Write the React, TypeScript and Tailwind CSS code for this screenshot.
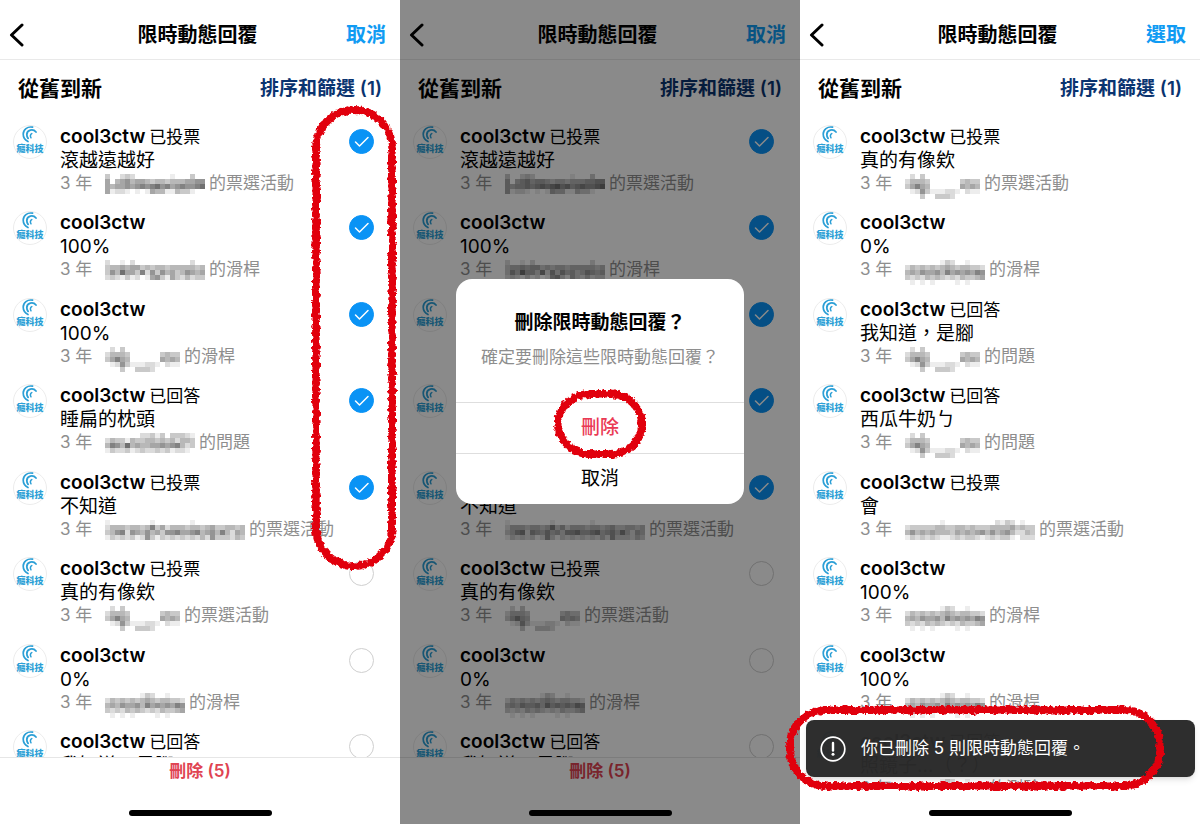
import React from 'react';

type MosaicKey = 'joking' | 'jokingAlt' | 'eg' | 'sunil' | 'sorry' | 'cool' | 'wen';

interface Reply {
  action?: string;
  body: string;
  mosaic: MosaicKey;
  target: string;
  checked?: boolean;
}

// Each string is one row of 5px cells, the digit is how dark the cell is
const MOSAICS: Record<MosaicKey, string[]> = {
  joking: [
    '30023200000001000300',
    '50456455434434445566',
    '54556567678675676678',
    '51221010154411433100',
  ],
  jokingAlt: [
    '20010200000000000200',
    '34454553434434444434',
    '36485537263645346545',
    '23213120156315324233',
  ],
  eg: [
    '020300000000000',
    '244430000003433',
    '357540000005454',
    '012631112210211',
    '000300333200000',
  ],
  sunil: [
    '000000022313033321',
    '243314334434342443',
    '476484544556567423',
    '132231232232312210',
  ],
  sorry: [
    '1000000001000000010000000000',
    '2444344347352444344345334434',
    '3467265464536675567456474254',
    '1323231263132323232426333243',
  ],
  cool: [
    '0000000132001000',
    '2434343454344332',
    '4546556475656576',
    '3232434323243345',
    '0101010000101000',
  ],
  wen: [
    '00000001000000000021320100',
    '23333344334434333444453433',
    '46454544435454564645642243',
    '13232321123233212323310222',
  ],
};

const SELECT_REPLIES: Reply[] = [
  { action: '已投票', body: '滾越遠越好', mosaic: 'joking', target: '的票選活動', checked: true },
  { body: '100%', mosaic: 'jokingAlt', target: '的滑桿', checked: true },
  { body: '100%', mosaic: 'eg', target: '的滑桿', checked: true },
  { action: '已回答', body: '睡扁的枕頭', mosaic: 'sunil', target: '的問題', checked: true },
  { action: '已投票', body: '不知道', mosaic: 'sorry', target: '的票選活動', checked: true },
  { action: '已投票', body: '真的有像欸', mosaic: 'eg', target: '的票選活動' },
  { body: '0%', mosaic: 'cool', target: '的滑桿' },
  { action: '已回答', body: '我知道，是腳', mosaic: 'eg', target: '的問題' },
];

const REMAINING_REPLIES: Reply[] = [
  { action: '已投票', body: '真的有像欸', mosaic: 'eg', target: '的票選活動' },
  { body: '0%', mosaic: 'cool', target: '的滑桿' },
  { action: '已回答', body: '我知道，是腳', mosaic: 'eg', target: '的問題' },
  { action: '已回答', body: '西瓜牛奶ㄅ', mosaic: 'eg', target: '的問題' },
  { action: '已投票', body: '會', mosaic: 'wen', target: '的票選活動' },
  { body: '100%', mosaic: 'cool', target: '的滑桿' },
  { body: '100%', mosaic: 'cool', target: '的滑桿' },
  { action: '已回答', body: '照鏡子…（？）', mosaic: 'cool', target: '的測驗' },
];

const Mosaic: React.FC<{ name: MosaicKey }> = ({ name }) => {
  const rows = MOSAICS[name];
  const width = rows[0].length * 5;

  return (
    <svg width={width} height="24" viewBox={`0 0 ${width} 24`} className="shrink-0 overflow-visible" shapeRendering="crispEdges" aria-hidden="true">
      {rows.map((row, y) =>
        row.split('').map((level, x) => (
          <rect key={`${x}-${y}`} x={x * 5} y={y * 5 + 2} width="5" height="5" fillOpacity={Number(level) * 0.07} />
        ))
      )}
    </svg>
  );
};

const Avatar: React.FC = () => (
  <svg width="34" height="34" viewBox="0 0 34 34" className="shrink-0" role="img" aria-label="癮科技">
    <circle cx="17" cy="17" r="16.5" fill="#fff" stroke="#ececec" />
    <g fill="none" stroke="#2b9fd6" strokeLinecap="round">
      <path d="M19.6 2.2C14.4 1.2 10.2 4.6 10.2 9c0 3.4 1.8 6 4.8 7.6" strokeWidth="1.7" />
      <path d="M23 7C20 3.4 14 4.8 13.8 9.6c0 1.6 0.5 2.8 1.3 3.8" strokeWidth="1.8" />
      <path d="M18.8 8.6c-1.4 0.6-1.9 2.4-0.8 4.2" strokeWidth="1.5" />
    </g>
    <text x="17" y="27" textAnchor="middle" fontSize="9" fontWeight="900" fill="#2b9fd6">
      癮科技
    </text>
  </svg>
);

const SelectBox: React.FC<{ label: string; checked: boolean }> = ({ label, checked }) => (
  <span className="relative mt-1 mr-[26px] size-[25px] shrink-0">
    <input
      type="checkbox"
      aria-label={label}
      defaultChecked={checked}
      className="peer block size-full appearance-none rounded-full border border-[#cfcfcf] checked:border-[#0a93f5] checked:bg-[#0a93f5]"
    />
    <svg
      viewBox="0 0 25 25"
      className="pointer-events-none absolute inset-0 hidden peer-checked:block"
      fill="none"
      stroke="#fff"
      strokeWidth="1.5"
      strokeLinecap="round"
      strokeLinejoin="round"
    >
      <path d="M6.5 13l4 4 8.5-8.5" />
    </svg>
  </span>
);

const ReplyRow: React.FC<{ reply: Reply; selectable: boolean }> = ({ reply, selectable }) => (
  <li className="flex h-[86px] shrink-0 items-start pt-[9px] pl-[13px] even:h-[87px]">
    <Avatar />
    <div className="ml-[13px] min-w-0 flex-1 pt-px whitespace-nowrap">
      <p className="flex h-[23px] items-center text-[17px]">
        <strong className="mr-1 text-[19px] font-semibold">cool3ctw</strong>
        {reply.action}
      </p>
      <p className="h-[23px] text-[19px] leading-[23px]">{reply.body}</p>
      <p className="flex h-6 items-center text-[17px] text-[#8e8e8e]">
        <span className="w-[45px] shrink-0">3 年</span>
        <Mosaic name={reply.mosaic} />
        <span className="ml-1">{reply.target}</span>
      </p>
    </div>
    {selectable && <SelectBox label={reply.body} checked={Boolean(reply.checked)} />}
  </li>
);

interface ScribbleProps {
  width: number;
  height: number;
  radius: number;
  className: string;
}

// Crayon outline: a thick rounded rect roughened with noise
const Scribble: React.FC<ScribbleProps> = ({ width, height, radius, className }) => (
  <svg width={width} height={height} className={`pointer-events-none absolute max-w-none overflow-visible ${className}`} aria-hidden="true">
    <g filter="url(#crayon)" fill="none" stroke="#e1000f">
      <rect x="5" y="5" width={width - 10} height={height - 10} rx={radius} strokeWidth="7" />
      <rect x="5" y="5" width={width - 10} height={height - 10} rx={radius} strokeWidth="8" strokeDasharray="4 2" />
    </g>
  </svg>
);

const HomeIndicator: React.FC = () => <div className="mx-auto mb-2 h-[6px] w-[143px] rounded-full bg-black" />;

interface PhoneScreenProps {
  actionLabel: string;
  replies: Reply[];
  selectable?: boolean;
  children?: React.ReactNode;
}

const PhoneScreen: React.FC<PhoneScreenProps> = ({ actionLabel, replies, selectable = false, children }) => (
  <section className="relative flex h-screen min-w-0 flex-col bg-white">
    <header className="grid h-[60px] shrink-0 grid-cols-[1fr_auto_1fr] items-center border-b border-[#e9e9e9] pt-[11px] pr-[14px] pl-[9px]">
      <button type="button" aria-label="返回" className="justify-self-start">
        <svg width="16" height="24" viewBox="0 0 16 24" fill="none" stroke="#000" strokeWidth="3" strokeLinecap="round" strokeLinejoin="round">
          <path d="M13 2L2.5 12 13 22" />
        </svg>
      </button>
      <h1 className="text-[20px] font-semibold">限時動態回覆</h1>
      <button type="button" className="justify-self-end text-[20px] font-semibold text-[#109bf3]">
        {actionLabel}
      </button>
    </header>

    <div className="flex h-14 shrink-0 items-center justify-between px-[18px] pt-[2px]">
      <h2 className="text-[21px] font-semibold">從舊到新</h2>
      <button type="button" className="text-[19px] font-semibold text-[#0a3470]">
        排序和篩選 (1)
      </button>
    </div>

    <ul className="flex min-h-0 flex-1 flex-col overflow-hidden">
      {replies.map((reply, index) => (
        <ReplyRow key={index} reply={reply} selectable={selectable} />
      ))}
    </ul>

    {selectable ? (
      <footer className="flex h-[67px] shrink-0 flex-col justify-between border-t border-[#e6e6e6]">
        <button type="button" className="mx-auto text-[17px] leading-[26px] font-semibold text-[#e04452]">
          刪除 (5)
        </button>
        <HomeIndicator />
      </footer>
    ) : (
      <footer className="flex h-[37px] shrink-0 flex-col justify-end">
        <HomeIndicator />
      </footer>
    )}

    {children}
  </section>
);

const ConfirmDialog: React.FC = () => (
  <div className="absolute inset-0 flex items-center justify-center bg-black/46">
    <div role="dialog" aria-label="刪除限時動態回覆？" className="mb-[42px] w-[72%] rounded-[16px] bg-white text-center">
      <div className="flex h-[123px] flex-col items-center pt-[30px] whitespace-nowrap">
        <h2 className="text-[19px] leading-7 font-bold">刪除限時動態回覆？</h2>
        <p className="mt-2 text-[17px] leading-6 text-[#8e8e8e]">確定要刪除這些限時動態回覆？</p>
      </div>
      <div className="relative border-t border-[#dedede]">
        <button type="button" className="h-[50px] w-full pt-[2px] text-[19px] font-medium text-[#ea3a55]">
          刪除
        </button>
        <Scribble width={94} height={70} radius={32} className="-top-[14px] left-1/2 -translate-x-1/2" />
      </div>
      <button type="button" className="h-[51px] w-full border-t border-[#dedede] pt-[2px] text-[19px]">
        取消
      </button>
    </div>
  </div>
);

const Toast: React.FC = () => (
  <div className="absolute right-[5px] bottom-[47px] left-[6px]">
    <div role="status" className="flex h-[57px] items-center rounded-[8px] bg-[#2a2a2a]/98 pl-[14px] text-[17px] text-white shadow-md">
      <svg width="26" height="26" viewBox="0 0 26 26" className="mr-[15px] shrink-0" fill="none" stroke="#fff" aria-hidden="true">
        <circle cx="13" cy="13" r="11.8" strokeWidth="1.7" />
        <path d="M13 7v7.5" strokeWidth="2.4" strokeLinecap="round" />
        <circle cx="13" cy="18.2" r="1.5" fill="#fff" stroke="none" />
      </svg>
      你已刪除 5 則限時動態回覆。
    </div>
    <Scribble width={380} height={86} radius={36} className="-top-[15px] -left-[21px]" />
  </div>
);

const App: React.FC = () => {
  return (
    <main lang="zh-Hant" className="grid grid-cols-3 bg-white font-['Inter','Noto_Sans_CJK_TC',sans-serif] text-black">
      <svg width="0" height="0" className="absolute" aria-hidden="true">
        <filter id="crayon" x="-50%" y="-50%" width="200%" height="200%">
          <feTurbulence type="fractalNoise" baseFrequency="0.25" numOctaves="2" seed="4" />
          <feDisplacementMap in="SourceGraphic" scale="5" xChannelSelector="R" yChannelSelector="G" />
        </filter>
      </svg>

      {/* Picking the replies */}
      <PhoneScreen actionLabel="取消" replies={SELECT_REPLIES} selectable>
        <Scribble width={86} height={466} radius={38} className="top-[105px] right-[3px]" />
      </PhoneScreen>

      {/* Confirming */}
      <PhoneScreen actionLabel="取消" replies={SELECT_REPLIES} selectable>
        <ConfirmDialog />
      </PhoneScreen>

      {/* After deleting */}
      <PhoneScreen actionLabel="選取" replies={REMAINING_REPLIES}>
        <Toast />
      </PhoneScreen>
    </main>
  );
};

export default App;
